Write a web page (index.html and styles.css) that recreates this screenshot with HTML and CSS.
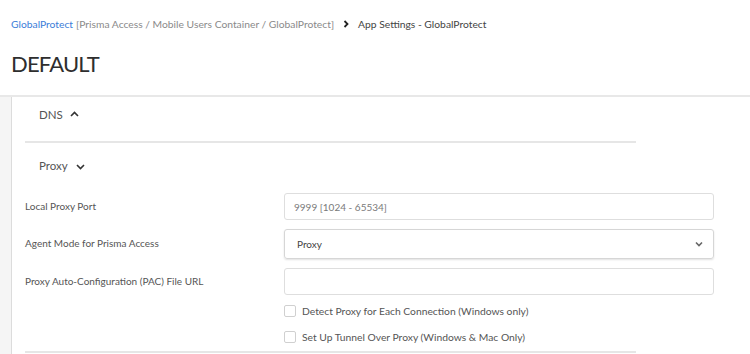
FILE: index.html
```html
<!DOCTYPE html>
<html lang="en">
<head>
    <meta charset="UTF-8">
    <title>App Settings - GlobalProtect</title>
    <link rel="stylesheet" href="styles.css">
</head>
<body>
    <div class="page-header">
        <div class="breadcrumb">
            <span class="crumb-link">GlobalProtect</span>
            <span class="crumb-scope">[Prisma Access / Mobile Users Container / GlobalProtect]</span>
            <svg class="crumb-sep" width="6" height="8" viewBox="0 0 6 8"><path d="M1.5 1 L4.5 4 L1.5 7" fill="none" stroke="#222" stroke-width="1.8"/></svg>
            <span class="crumb-current">App Settings - GlobalProtect</span>
        </div>
        <h1 class="page-title">DEFAULT</h1>
    </div>

    <div class="page-body">
        <div class="side-rail"></div>
        <div class="content">
            <div class="section-head section-dns">
                <span>DNS</span>
                <svg width="9" height="6" viewBox="0 0 9 6"><path d="M1 5 L4.5 1.5 L8 5" fill="none" stroke="#333" stroke-width="1.6"/></svg>
            </div>
            <div class="divider"></div>
            <div class="section-head section-proxy">
                <span>Proxy</span>
                <svg width="9" height="6" viewBox="0 0 9 6"><path d="M1 1 L4.5 4.5 L8 1" fill="none" stroke="#333" stroke-width="1.6"/></svg>
            </div>

            <div class="form">
                <div class="form-row row-port">
                    <label class="form-label">Local Proxy Port</label>
                    <div class="text-input"><span class="placeholder">9999 [1024 - 65534]</span></div>
                </div>
                <div class="form-row row-mode">
                    <label class="form-label">Agent Mode for Prisma Access</label>
                    <div class="select-input">
                        <span>Proxy</span>
                        <svg width="8" height="6" viewBox="0 0 8 6"><path d="M1 1.5 L4 4.5 L7 1.5" fill="none" stroke="#666" stroke-width="1.6"/></svg>
                    </div>
                </div>
                <div class="form-row row-pac">
                    <label class="form-label">Proxy Auto-Configuration (PAC) File URL</label>
                    <div class="text-input"></div>
                </div>
                <div class="check-row check-first">
                    <span class="checkbox"></span>
                    <span>Detect Proxy for Each Connection (Windows only)</span>
                </div>
                <div class="check-row check-second">
                    <span class="checkbox"></span>
                    <span>Set Up Tunnel Over Proxy (Windows &amp; Mac Only)</span>
                </div>
            </div>
            <div class="divider bottom-divider"></div>
        </div>
    </div>
</body>
</html>
```

FILE: styles.css
```css
body {
    margin: 0;
    background-color: #fff;
    font-family: Lato, "Open Sans", sans-serif;
    color: #333;
    overflow: hidden;
}

.page-header {
    padding: 18px 11px 0;
    height: 77px;
}

.breadcrumb {
    display: flex;
    align-items: center;
    font-size: 10.3px;
    line-height: 12px;
    white-space: nowrap;
}

.crumb-link {
    color: #3b7dd8;
}

.crumb-scope {
    color: #8a8a8a;
    margin-left: 3px;
}

.crumb-sep {
    margin: 0 9px 0 9px;
}

.crumb-current {
    color: #444;
}

.page-title {
    margin: 20px 0 0;
    font-size: 22px;
    line-height: 28px;
    font-weight: 400;
    color: #2e2e2e;
    letter-spacing: -0.8px;
}

.page-body {
    display: flex;
    border-top: 2px solid #e8e8e8;
    height: 260px;
}

.side-rail {
    width: 11px;
    background-color: #f5f5f5;
    border-right: 1px solid #dcdcdc;
}

.content {
    flex: 1;
}

.section-head {
    display: flex;
    align-items: center;
    gap: 7px;
    padding-left: 27px;
    font-size: 11.5px;
    color: #555;
    height: 14px;
}

.section-dns {
    margin-top: 10px;
}

.section-dns svg {
    margin-top: -1px;
}

.section-proxy {
    margin-top: 15px;
}

.section-proxy svg {
    margin-top: 3px;
    margin-left: 1px;
}

.divider {
    margin-left: 13px;
    width: 611px;
    height: 2px;
    background-color: #e6e6e6;
    margin-top: 20px;
}

.form {
    margin-top: 21px;
    padding-left: 13px;
}

.form-row {
    display: flex;
    align-items: center;
}

.form-label {
    width: 259px;
    font-size: 10px;
    line-height: 12px;
    color: #555;
    margin-top: -2px;
}

.text-input {
    box-sizing: border-box;
    width: 430px;
    height: 27px;
    border: 1px solid #dedede;
    border-radius: 3px;
    padding-left: 9px;
    display: flex;
    align-items: center;
    font-size: 10px;
}

.placeholder {
    color: #7a7a7a;
}

.row-mode {
    margin-top: 9px;
}

.select-input {
    box-sizing: border-box;
    width: 430px;
    height: 30px;
    border: 1px solid #d6d6d6;
    border-radius: 3px;
    box-shadow: 0 1px 2px rgba(0, 0, 0, 0.12);
    padding: 0 10px 0 12px;
    display: flex;
    align-items: center;
    justify-content: space-between;
    font-size: 10px;
    color: #444;
}

.row-pac {
    margin-top: 9px;
}

.check-row {
    display: flex;
    align-items: center;
    gap: 6px;
    margin-left: 259px;
    font-size: 10.3px;
    line-height: 12px;
    color: #555;
}

.check-first {
    margin-top: 10px;
}

.check-second {
    margin-top: 14px;
}

.checkbox {
    box-sizing: border-box;
    width: 12px;
    height: 12px;
    border: 1px solid #d0d0d0;
    border-radius: 2px;
}

.bottom-divider {
    margin-top: 8px;
}
```
